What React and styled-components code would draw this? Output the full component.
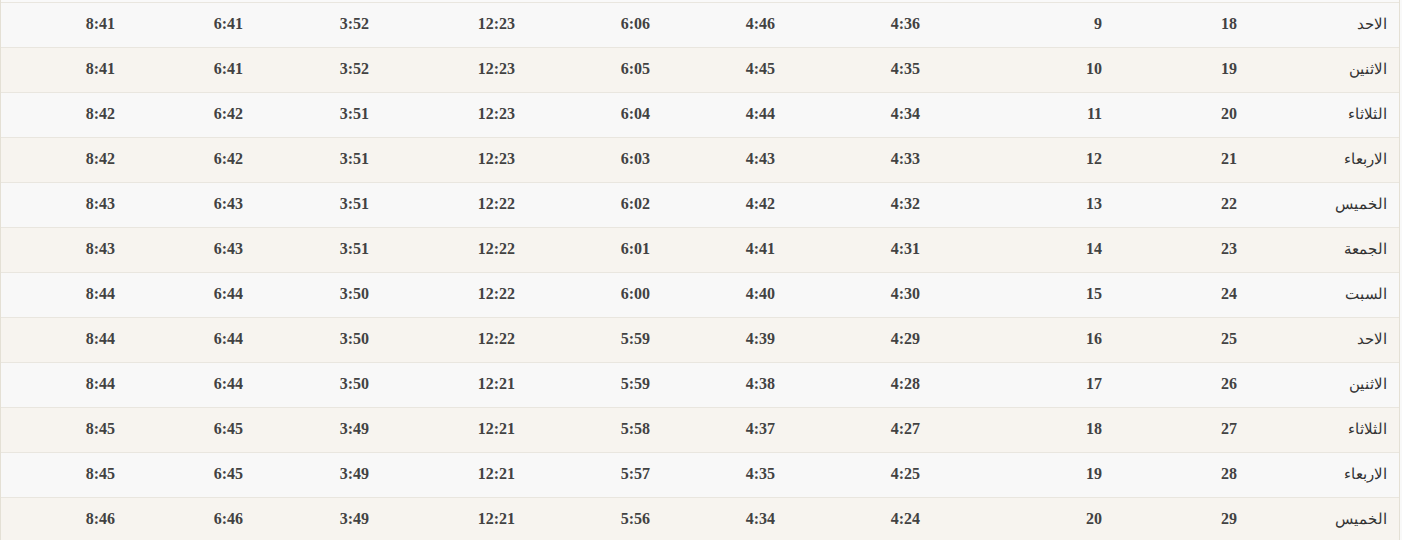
import React from 'react';
import styled, {createGlobalStyle} from "styled-components"

const GlobalStyle = createGlobalStyle`
  html, body {
    margin: 0;
    padding: 0;
    background: #f9f9f9;
  }
`
const Wrapper = styled.div`
  width: 1400px;
  box-sizing: border-box;
  border-left: 1px solid #e4e0d5;
  border-right: 1px solid #e4e0d5;
  padding-top: 2px;
  background: #f9f9f9;
`
const Table = styled.table`
  direction: rtl;
  width: 1398px;
  table-layout: fixed;
  border-collapse: collapse;
  border-top: 1px solid #e9e6df;
  font-family: "Liberation Serif", "DejaVu Serif", serif;
  color: #424242;
`
const Row = styled.tr`
  background: ${props => props.$odd ? '#f7f4ef' : '#f8f8f8'};
`
const Cell = styled.td`
  height: 45px;
  padding: 0 12px 2px;
  border-bottom: 1px solid #e9e6df;
  text-align: right;
  vertical-align: middle;
  font-size: 16px;
  font-weight: 700;
  line-height: 20px;
  box-sizing: border-box;
`
const DayCell = styled(Cell)`
  font-weight: 400;
  font-size: 15px;
  color: #333;
`

const widths = [150, 135, 182, 145, 125, 135, 146, 126, 128, 126]

const rows = [
    ['الاحد', '18', '9', '4:36', '4:46', '6:06', '12:23', '3:52', '6:41', '8:41'],
    ['الاثنين', '19', '10', '4:35', '4:45', '6:05', '12:23', '3:52', '6:41', '8:41'],
    ['الثلاثاء', '20', '11', '4:34', '4:44', '6:04', '12:23', '3:51', '6:42', '8:42'],
    ['الاربعاء', '21', '12', '4:33', '4:43', '6:03', '12:23', '3:51', '6:42', '8:42'],
    ['الخميس', '22', '13', '4:32', '4:42', '6:02', '12:22', '3:51', '6:43', '8:43'],
    ['الجمعة', '23', '14', '4:31', '4:41', '6:01', '12:22', '3:51', '6:43', '8:43'],
    ['السبت', '24', '15', '4:30', '4:40', '6:00', '12:22', '3:50', '6:44', '8:44'],
    ['الاحد', '25', '16', '4:29', '4:39', '5:59', '12:22', '3:50', '6:44', '8:44'],
    ['الاثنين', '26', '17', '4:28', '4:38', '5:59', '12:21', '3:50', '6:44', '8:44'],
    ['الثلاثاء', '27', '18', '4:27', '4:37', '5:58', '12:21', '3:49', '6:45', '8:45'],
    ['الاربعاء', '28', '19', '4:25', '4:35', '5:57', '12:21', '3:49', '6:45', '8:45'],
    ['الخميس', '29', '20', '4:24', '4:34', '5:56', '12:21', '3:49', '6:46', '8:46'],
]

const App = () => {
    return (
        <>
            <GlobalStyle/>
            <Wrapper>
                <Table>
                    <colgroup>
                        {widths.map((w, i) => <col key={i} width={w}/>)}
                    </colgroup>
                    <tbody>
                    {rows.map((r, i) => (
                        <Row key={i} $odd={i % 2 === 1}>
                            <DayCell>{r[0]}</DayCell>
                            {r.slice(1).map((v, j) => <Cell key={j}>{v}</Cell>)}
                        </Row>
                    ))}
                    </tbody>
                </Table>
            </Wrapper>
        </>
    );
};

export default App;
